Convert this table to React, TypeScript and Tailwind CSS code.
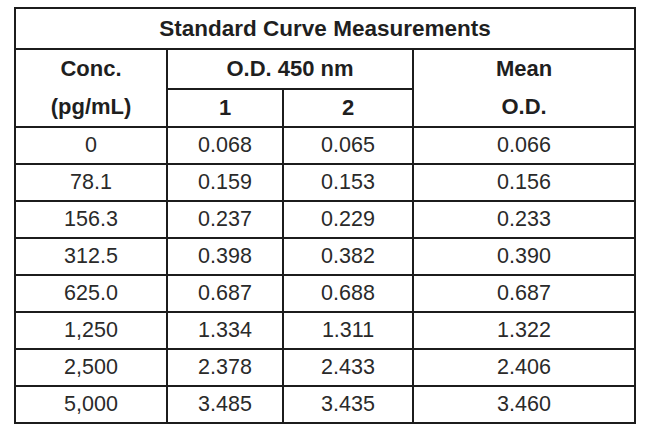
const rows: [string, string, string, string][] = [
  ["0", "0.068", "0.065", "0.066"],
  ["78.1", "0.159", "0.153", "0.156"],
  ["156.3", "0.237", "0.229", "0.233"],
  ["312.5", "0.398", "0.382", "0.390"],
  ["625.0", "0.687", "0.688", "0.687"],
  ["1,250", "1.334", "1.311", "1.322"],
  ["2,500", "2.378", "2.433", "2.406"],
  ["5,000", "3.485", "3.435", "3.460"],
];

const cell = "border-2 border-[#1c1c1c] text-center align-middle p-0";

export default function App() {
  return (
    <div className="w-[650px] h-[437px] bg-white pt-[7px] pl-[14px] font-['Liberation_Sans',Arial,sans-serif] text-[#1f1f1f]">
      <table className="table-fixed border-collapse w-[620px]">
        <colgroup>
          <col className="w-[152px]" />
          <col className="w-[116px]" />
          <col className="w-[130px]" />
          <col className="w-[222px]" />
        </colgroup>
        <thead className="font-bold text-[22px]">
          <tr className="h-[41px]">
            <th colSpan={4} className={cell + " text-[22.5px]"}>
              Standard Curve Measurements
            </th>
          </tr>
          <tr className="h-[39px]">
            <th rowSpan={2} className={cell + " leading-[38px]"}>
              Conc.
              <br />
              (pg/mL)
            </th>
            <th colSpan={2} className={cell}>
              O.D. 450 nm
            </th>
            <th rowSpan={2} className={cell + " leading-[38px]"}>
              Mean
              <br />
              O.D.
            </th>
          </tr>
          <tr className="h-[38px]">
            <th className={cell}>1</th>
            <th className={cell}>2</th>
          </tr>
        </thead>
        <tbody className="text-[21.5px] text-[#2a2a2a]">
          {rows.map((r) => (
            <tr key={r[0]} className="h-[37px]">
              {r.map((v, i) => (
                <td key={i} className={cell}>
                  {v}
                </td>
              ))}
            </tr>
          ))}
        </tbody>
      </table>
    </div>
  );
}
